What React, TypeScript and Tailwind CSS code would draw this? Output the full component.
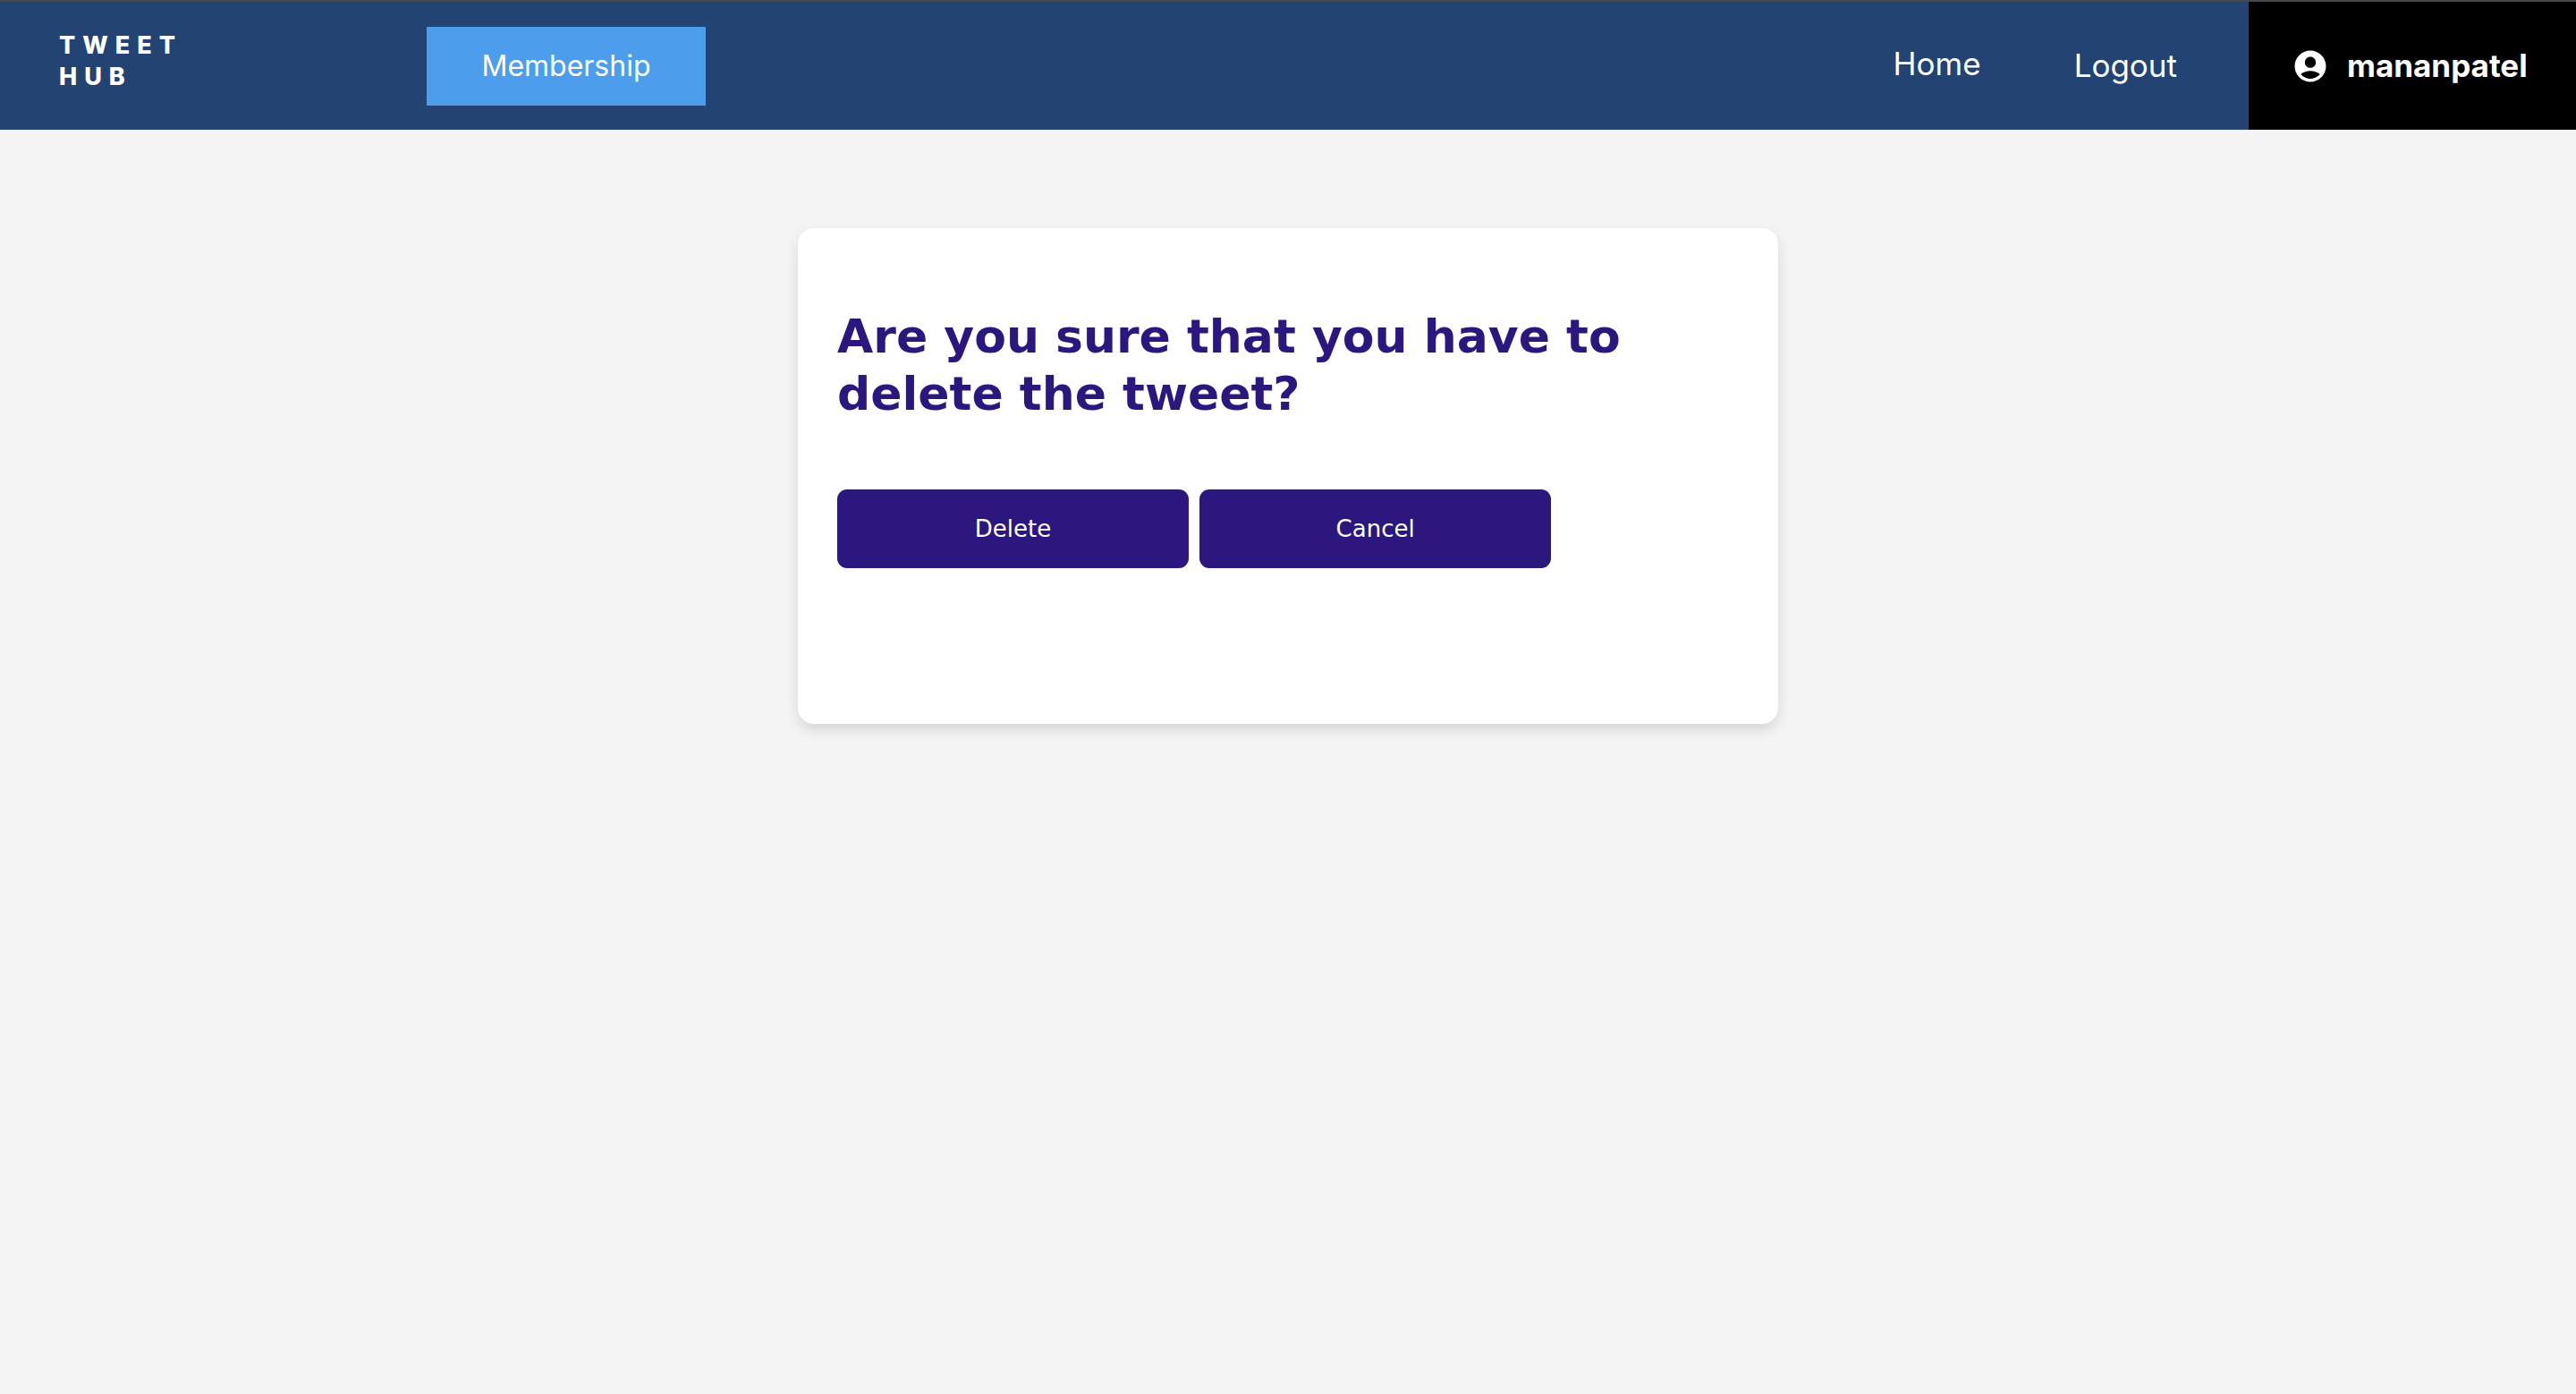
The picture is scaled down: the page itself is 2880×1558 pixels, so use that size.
import { MdAccountCircle } from "react-icons/md";

function Header() {
  return (
    <header className="flex h-[145px] items-stretch border-t-2 border-[#48484a] bg-[#234372] font-['Inter','Noto_Sans',sans-serif] text-white">
      <a
        href="#"
        className="ml-[66px] mt-[31px] w-[411px] text-[27px] font-extrabold leading-[35px] tracking-[8px]"
      >
        TWEET
        <br />
        HUB
      </a>
      <button
        type="button"
        className="mt-7 h-[88px] w-[312px] bg-[#4c9dec] text-[32px]"
      >
        Membership
      </button>
      <nav className="ml-auto flex items-center text-[35px]">
        <a href="#" className="mr-[104px] pb-1">
          Home
        </a>
        <a href="#" className="mr-20">
          Logout
        </a>
      </nav>
      <a
        href="#"
        className="flex w-[366px] items-center bg-black pl-12 text-[35px] font-bold"
      >
        <MdAccountCircle className="mr-5 size-[42px]" />
        mananpatel
      </a>
    </header>
  );
}

function ConfirmDelete() {
  return (
    <section className="mx-auto mt-[110px] w-full max-w-[1096px] rounded-[18px] bg-white px-11 pb-[174px] pt-[89px] shadow-[0_7px_15px_rgba(0,0,0,0.12)]">
      <h1 className="text-[52px] font-bold leading-[64px] text-[#2c177e]">
        Are you sure that you have to delete the tweet?
      </h1>
      <div className="mt-[75px] flex gap-3 text-[26px] text-white">
        <button type="button" className="h-[88px] w-[39%] rounded-[11px] bg-[#2c177e]">
          Delete
        </button>
        <button type="button" className="h-[88px] w-[39%] rounded-[11px] bg-[#2c177e]">
          Cancel
        </button>
      </div>
    </section>
  );
}

export default function App() {
  return (
    <div className="min-h-screen bg-[#f4f4f4] font-['DejaVu_Sans',sans-serif]">
      <Header />
      <main>
        <ConfirmDelete />
      </main>
    </div>
  );
}
